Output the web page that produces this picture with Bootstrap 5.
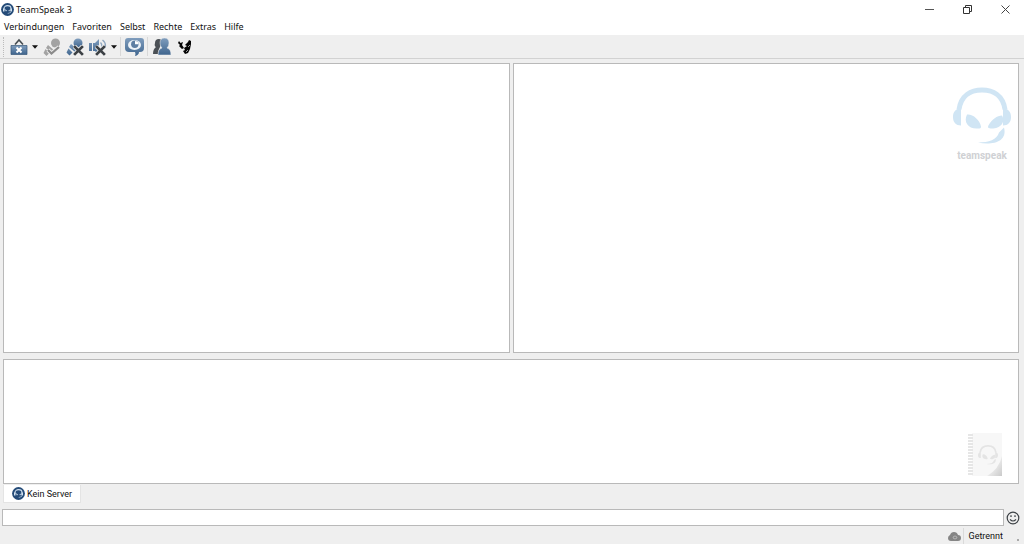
<!DOCTYPE html>
<html lang="de">
<head>
<meta charset="utf-8">
<meta name="viewport" content="width=device-width, initial-scale=1">
<title>TeamSpeak 3</title>
<link href="https://cdn.jsdelivr.net/npm/bootstrap@5.3.0/dist/css/bootstrap.min.css" rel="stylesheet">
<style>
body{font-family:"Noto Sans","Open Sans",sans-serif;font-size:9px;line-height:16px;color:#111;background:#efefef}
button{border:0;background:none;padding:0;color:inherit;line-height:0}
svg{display:block;flex:none}
.app-title{height:19px;padding:0 1px;gap:2px}
.win-btn{width:36px;height:19px}
.app-menu{height:16px;padding-left:4px;gap:8px}
.app-menu a{color:#111;text-decoration:none}
.tools{height:24px;border-bottom:1px solid #d2d2d2;padding-left:3px}
.grip{width:1px;height:20px;margin-right:3px;border-left:1px dotted #bbb}
.tool{width:23px;height:23px}
.drop{width:10px;height:23px}
.tool-sep{width:1px;height:19px;margin:0 2px 0 1px;background:#d8d8d8}
.work{padding:4px 5px 1px 3px;min-height:0}
.upper{flex:291 1 0;gap:3px;margin-bottom:6px;min-height:0}
.lower{flex:124 1 0}
.half{flex:1 1 0}
.pane{background:#fff;border:1px solid #b9b9b9;min-height:0}
.brand-mark{padding:22px 7px 0 0}
.brand-art{color:#d0e5f4}
.brand-name{font-family:Roboto,sans-serif;font-size:10px;font-weight:bold;line-height:17px;color:#cfd1d4}
.notebook{padding:0 15px 6px 0}
.notebook-art{color:#e4e4e4}
.tab-row{padding-left:3px}
.server-tab,.state-text{font-family:Roboto,sans-serif;font-size:9px}
.server-tab{height:18px;padding:0 8px;gap:2px;background:#fff;border:1px solid #e4e4e4;border-top:0;color:#111;text-decoration:none}
.entry{padding:6px 4px 0 2px;gap:2px}
.entry input{height:17px;border:1px solid #b9b9b9;border-radius:0;padding:0 3px;font-size:10px;min-height:0}
.entry input:focus{box-shadow:none}
.app-status{height:18px;padding:2px 5px 0 0;gap:2px}
.state-text{padding:0 12px 0 5px;border-left:1px solid #dadada}
.size-dot{width:2px;height:2px;background:#aaa;margin-bottom:3px}
</style>
</head>
<body>
<svg width="0" height="0" class="position-absolute" aria-hidden="true">
<defs>
<linearGradient id="steel" x1="0" y1="0" x2="0" y2="1"><stop offset="0" stop-color="#7f9dbd"/><stop offset="1" stop-color="#3f658e"/></linearGradient>
<linearGradient id="curl" x1="0" y1="0" x2="1" y2="1"><stop offset=".2" stop-color="#fff"/><stop offset="1" stop-color="#cacaca"/></linearGradient>
<symbol id="headset" viewBox="0 0 58 58">
<path d="M6 22C8 8 18 2.500 29 2.500S50 8 52 22" fill="none" stroke="currentColor" stroke-width="5"/>
<path d="M8 21v17C3 38 0 35 0 29.500S3 21 8 21zM50 21v17c5 0 8-3 8-8.500S55 21 50 21z" fill="currentColor"/>
<path d="M14 27c5-1 13 5 14 12 0 2-1 2-3 2-9 1-15-6-11-14zM49 28c4 7-2 13-10 13-4 0-5-1-3-4 3-5 8-9 13-9zM51 40c4 15-13 18-26 15 11 0 19-3 21-10z" fill="currentColor"/>
</symbol>
<symbol id="logo" viewBox="0 0 13 13">
<circle cx="6.500" cy="6.500" r="6.400" fill="#244b78"/>
<path d="M3 7V5.500C3 1.700 10 1.700 10 5.500V8" fill="none" stroke="#d3e2f0" stroke-width="1.100"/>
<path d="M2 5.500h1.500v3H2zM9.500 5.500H11v3H9.500zM4 6l2.300 2-1.700.3zM9 6.500l-2 1.600 1.600.1zM6 10.300c2 .3 4 0 4.300-2L9 9.500z" fill="#d3e2f0"/>
</symbol>
<symbol id="cross" viewBox="0 0 10 10"><path d="M1 1l8 8M9 1L1 9" stroke="#efefef" stroke-width="4"/><path d="M1 1l8 8M9 1L1 9" stroke="#3c4145" stroke-width="2.500"/></symbol>
<symbol id="caret" viewBox="0 0 7 4"><path d="M0 0h7L3.500 4z" fill="#111"/></symbol>
</defs>
</svg>
<div class="d-flex flex-column vh-100 overflow-hidden">
<header class="bg-white">
<div class="app-title d-flex align-items-center">
<svg width="13" height="13"><use href="#logo"/></svg><span class="me-auto">TeamSpeak 3</span>
<button class="win-btn" aria-label="Minimieren"><svg class="mx-auto" width="9" height="9"><path d="M0 4.500h9" stroke="#555"/></svg></button>
<button class="win-btn" aria-label="Wiederherstellen"><svg class="mx-auto" width="9" height="9" fill="none" stroke="#333"><path d="M.5 2.500h6v6h-6zM2.500 2.500v-2h6v6h-2"/></svg></button>
<button class="win-btn" aria-label="Schließen"><svg class="mx-auto" width="9" height="9"><path d="M.5.5l8 8M8.500.5l-8 8" stroke="#444"/></svg></button>
</div>
<nav class="app-menu d-flex align-items-center" aria-label="Menü">
<a href="#">Verbindungen</a><a href="#">Favoriten</a><a href="#">Selbst</a><a href="#">Rechte</a><a href="#">Extras</a><a href="#">Hilfe</a>
</nav>
</header>
<div class="tools d-flex align-items-center" role="toolbar">
<span class="grip"></span>
<button class="tool" aria-label="Verbindung"><svg class="mx-auto" width="18" height="18"><path d="M5 6.500l4-4.500 4 4.500" fill="none" stroke="#444b50" stroke-width="1.600"/><path d="M1 7.500h16v9H1z" fill="url(#steel)" stroke="#365878" stroke-width=".7"/><path d="M6.500 9.500l5 5M11.500 9.500l-5 5" stroke="#fff" stroke-width="2"/></svg></button>
<button class="drop" aria-label="Verbindungen öffnen"><svg class="mx-auto" width="6" height="4"><use href="#caret" width="6" height="4"/></svg></button>
<button class="tool" aria-label="Verbinden"><svg class="mx-auto" width="18" height="18" fill="#a3a3a3"><circle cx="12.500" cy="5" r="4.500"/><path d="M5 7l7 6-3 2-6-5zM2.500 11l4 4-3 3-3-3z"/><path d="M5 12l3.500 3.500L16 9" fill="none" stroke="#efefef" stroke-width="4"/><path d="M5 12l3.500 3.500L16 9" fill="none" stroke="#8b8b8b" stroke-width="2.300"/></svg></button>
<button class="tool" aria-label="Trennen"><svg class="mx-auto" width="18" height="18" fill="url(#steel)"><circle cx="12" cy="5" r="4.500"/><path d="M5 6l7 6-3 2-6-5zM2.500 10.500l4 4-3 3-3-3z"/><use href="#cross" x="7" y="7" width="11" height="11"/></svg></button>
<button class="tool" aria-label="Ton aus"><svg class="mx-auto" width="18" height="18"><path d="M0 5h3v8H0zM4 5h2l4-4v16l-4-4H4z" fill="url(#steel)"/><path d="M11.500 4.500q2 2 1 5M13.500 2q4 3 2.500 8" fill="none" stroke="#8ea6bf" stroke-width="1.400"/><use href="#cross" x="6" y="7" width="11" height="11"/></svg></button>
<button class="drop" aria-label="Tonmenü"><svg class="mx-auto" width="6" height="4"><use href="#caret" width="6" height="4"/></svg></button>
<span class="tool-sep"></span>
<button class="tool" aria-label="Abonnieren"><svg class="mx-auto" width="19" height="18"><path d="M3 0h13q3 0 3 3v7q0 4-4 4h-1q0 3-4 4 1-2 0-4H4q-4 0-4-4V3q0-3 3-3z" fill="url(#steel)"/><ellipse cx="9.500" cy="7" rx="6.500" ry="5" fill="#eef3f8"/><circle cx="9.800" cy="6.300" r="3.700" fill="#5f7fa3"/><path d="M10 3q3.500 0 3.500 3.300H10z" fill="#fff"/></svg></button>
<span class="tool-sep"></span>
<button class="tool" aria-label="Kontakte"><svg class="mx-auto" width="18" height="18"><path d="M2 5q0-4 4-4 2 0 3 2l-2 6q-2 3-2 7H0q0-5 3-7Q1 8 2 5z" fill="#4b5055"/><path d="M7 5q0-5 4.500-5T16 5q0 3-2 5 4 1 4 7H5q0-6 4-7-2-2-2-5z" fill="url(#steel)" stroke="#efefef" stroke-width=".5"/></svg></button>
<button class="tool" aria-label="Flüstern"><svg class="mx-auto" width="14" height="16"><path d="M1 2l1.500 2L5 3 4 6l2 3-2 1-3-3 1-1-2-2zM8 5l2-2 1-2 2 1v3l-1 5-2 4-3 1-2-3 2-1-1-2 3-2-2-1z" fill="#050505"/><path d="M10 8l2-2M8 13l2-2" stroke="#ddd" stroke-width=".7"/></svg></button>
</div>
<main class="work flex-fill d-flex flex-column">
<div class="upper d-flex">
<section class="pane half" aria-label="Serverbaum"></section>
<section class="pane half" aria-label="Information">
<div class="brand-mark d-flex justify-content-end">
<div class="brand-art d-flex flex-column align-items-center">
<svg width="58" height="61"><use href="#headset" width="58" height="61"/></svg>
<span class="brand-name">teamspeak</span>
</div>
</div>
</section>
</div>
<section class="pane lower d-flex justify-content-end align-items-end" aria-label="Chat">
<div class="notebook notebook-art">
<svg width="36" height="45"><path d="M5 1h30v29L23 44H5z" fill="#f7f7f7"/><path d="M35 24v20H20q12-7 15-20z" fill="url(#curl)"/><path d="M3.500 2v42" stroke="#e6e6e6" stroke-width="5" stroke-dasharray="2 1"/><use href="#headset" x="11" y="13" width="20" height="20"/></svg>
</div>
</section>
</main>
<footer>
<div class="tab-row d-flex"><a href="#" class="server-tab d-flex align-items-center"><svg width="13" height="13"><use href="#logo"/></svg>Kein Server</a></div>
<div class="entry d-flex align-items-center">
<input type="text" class="form-control" aria-label="Nachricht">
<button aria-label="Emoticons"><svg width="14" height="14" fill="none" stroke="#3d4246" stroke-width="1.200"><circle cx="7" cy="7" r="5.800"/><path d="M4 8.300q3 3.400 6 0"/><path d="M5 4.300v1.600M9 4.300v1.600" stroke-width="1.300"/></svg></button>
</div>
<div class="app-status d-flex justify-content-end align-items-center">
<svg width="13" height="9"><path d="M3 9q-3 0-3-3 0-2 2-3Q3 0 6 0q3 0 4 3 3 0 3 3t-3 3z" fill="#858585"/><path d="M5 6q0-2 2-2t2 2l-2 1z" fill="none" stroke="#b5b5b5"/></svg>
<span class="state-text">Getrennt</span><span class="size-dot align-self-end"></span>
</div>
</footer>
</div>
<script src="https://cdn.jsdelivr.net/npm/bootstrap@5.3.0/dist/js/bootstrap.bundle.min.js"></script>
</body>
</html>
